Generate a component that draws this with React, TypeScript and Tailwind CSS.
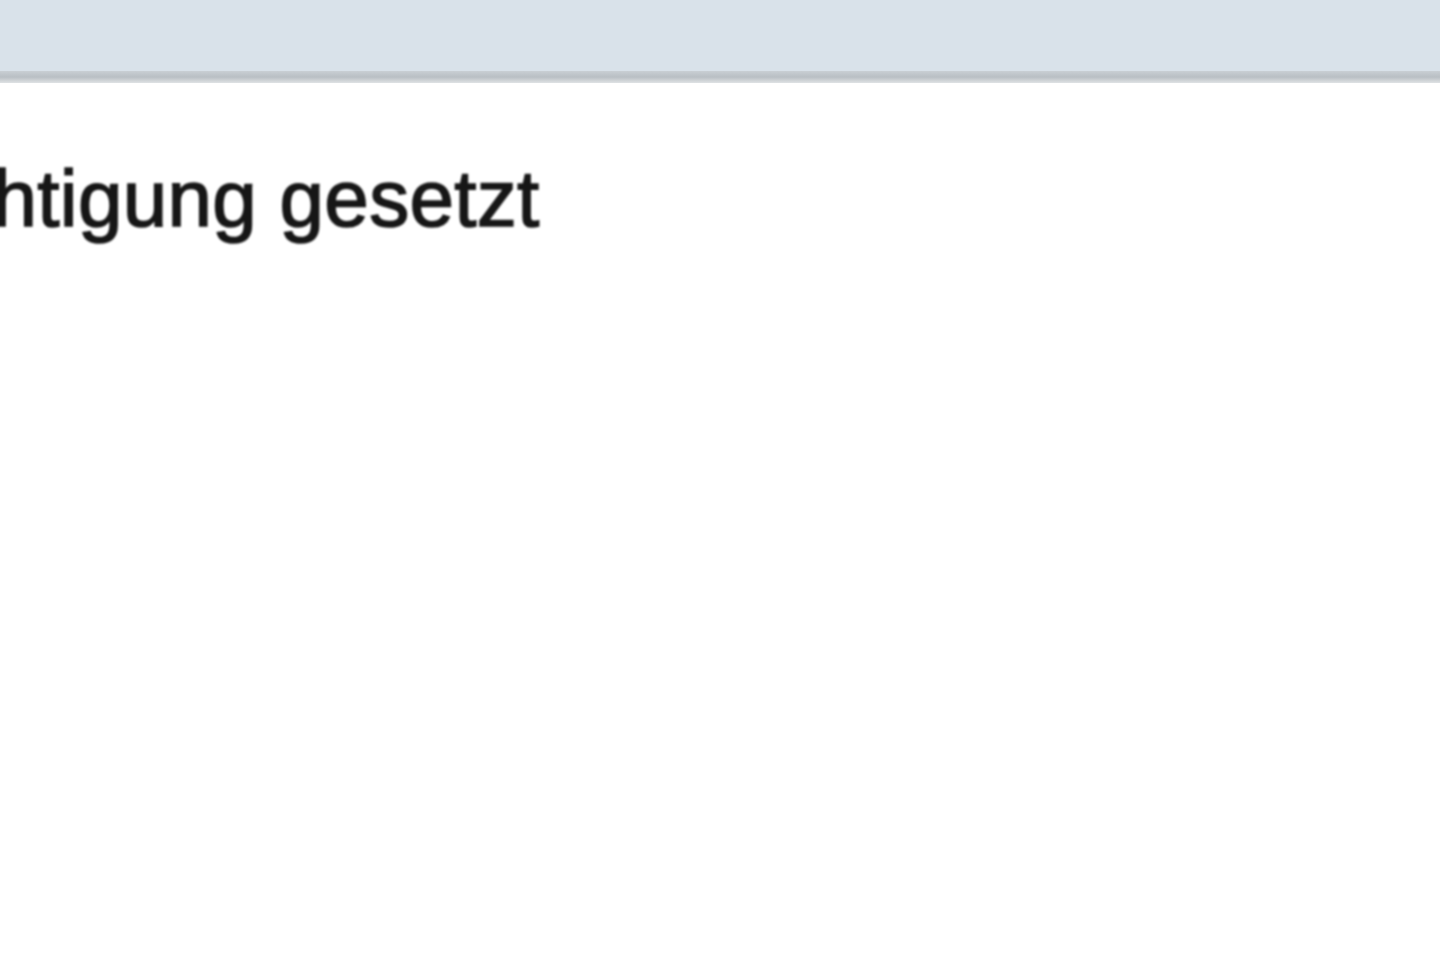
import React from "react";

export default function App() {
  return (
    <div className="w-[1440px] h-[960px] bg-white overflow-hidden flex flex-col">
      <div className="h-[71px] bg-[#d9e2ea] shrink-0" />
      <div className="h-[12px] shrink-0 bg-gradient-to-b from-[#c9cfd4] via-[#b9bfc4] to-[#dfe2e4]" />
      <div className="pt-[76px]">
        <p
          className="ml-[-218px] whitespace-nowrap text-[80px] leading-none tracking-[0.3px] text-[#161616] blur-[1.1px] [-webkit-text-stroke:1.6px_#161616]"
          style={{ fontFamily: '"Liberation Sans", Arial, sans-serif' }}
        >
          Berechtigung gesetzt
        </p>
      </div>
    </div>
  );
}
